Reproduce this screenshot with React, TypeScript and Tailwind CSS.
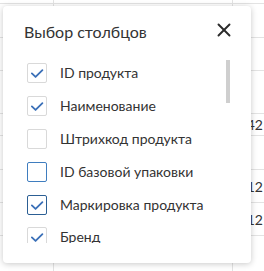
import { X } from "lucide-react"

// Колонки с состоянием чекбоксов
const columns = [
  { id: 1, label: "ID продукта", checked: true, tone: "idle" },
  { id: 2, label: "Наименование", checked: true, tone: "idle" },
  { id: 3, label: "Штрихкод продукта", checked: false, tone: "idle" },
  { id: 4, label: "ID базовой упаковки", checked: false, tone: "hover" },
  { id: 5, label: "Маркировка продукта", checked: true, tone: "focus" },
  { id: 6, label: "Бренд", checked: true, tone: "idle" },
]

// Строки таблицы под диалогом
const rows = [
  { h: "h-[4px]", value: "" },
  { h: "h-[34px]", value: "" },
  { h: "h-[33px]", value: "" },
  { h: "h-[43px]", value: "" },
  { h: "h-[22px]", value: "42" },
  { h: "h-[34px]", value: "" },
  { h: "h-[33px]", value: "12" },
  { h: "h-[33px]", value: "12" },
  { h: "h-[40px]", value: "" },
]

function Checkbox({ checked, tone }: { checked: boolean; tone: string }) {
  const border =
    tone === "focus" ? "border-[#2c5f94]" : tone === "hover" ? "border-[#3f7dbf]" : "border-[#d9d9d9]"
  return (
    <div className={`flex h-[20px] w-[20px] shrink-0 items-center justify-center rounded-[2px] border bg-white ${border}`}>
      {checked && (
        <svg width="20" height="20" viewBox="0 0 20 20" fill="none">
          <path d="M4.3 10.4 8.4 14.4 16 6.8" stroke="#3b70b8" strokeWidth="2" strokeLinecap="round" strokeLinejoin="round" />
        </svg>
      )}
    </div>
  )
}

export default function App() {
  return (
    <div className="relative h-[271px] w-[264px] overflow-hidden bg-white font-['Lato',sans-serif] text-[#333]">
      <div className="flex flex-col">
        {rows.map((row, i) => (
          <div key={i} className={`grid grid-cols-[54px_179px_1fr] border-b border-[#e3e3e3] ${row.h}`}>
            <div className="border-r border-[#e3e3e3]" />
            <div className="border-r border-[#e3e3e3]" />
            <div className="flex items-center justify-end pr-[1px] text-[14px]">{row.value}</div>
          </div>
        ))}
      </div>

      <div className="absolute left-[3px] top-[6px] flex h-[257px] w-[248px] flex-col rounded-[4px] bg-white shadow-[0_1px_6px_rgba(0,0,0,0.22)]">
        <div className="flex h-[51px] items-start justify-between pl-[21px] pr-[16px] pt-[14px]">
          <span className="text-[16px] leading-[24px]">Выбор столбцов</span>
          <X className="-mt-[1px] h-[22px] w-[22px]" strokeWidth={2.1} color="#2b2b2b" />
        </div>
        <div className="relative h-[186px] overflow-hidden">
          <div className="flex flex-col">
            {columns.map((col) => (
              <div key={col.id} className="flex h-[32.8px] shrink-0 items-center gap-[13px] pl-[24px]">
                <Checkbox checked={col.checked} tone={col.tone} />
                <span className="text-[14px] leading-[20px]">{col.label}</span>
              </div>
            ))}
          </div>
          <div className="absolute left-[223px] top-[3px] h-[43px] w-[4px] bg-[#cfcfcf]" />
        </div>
      </div>
    </div>
  )
}
